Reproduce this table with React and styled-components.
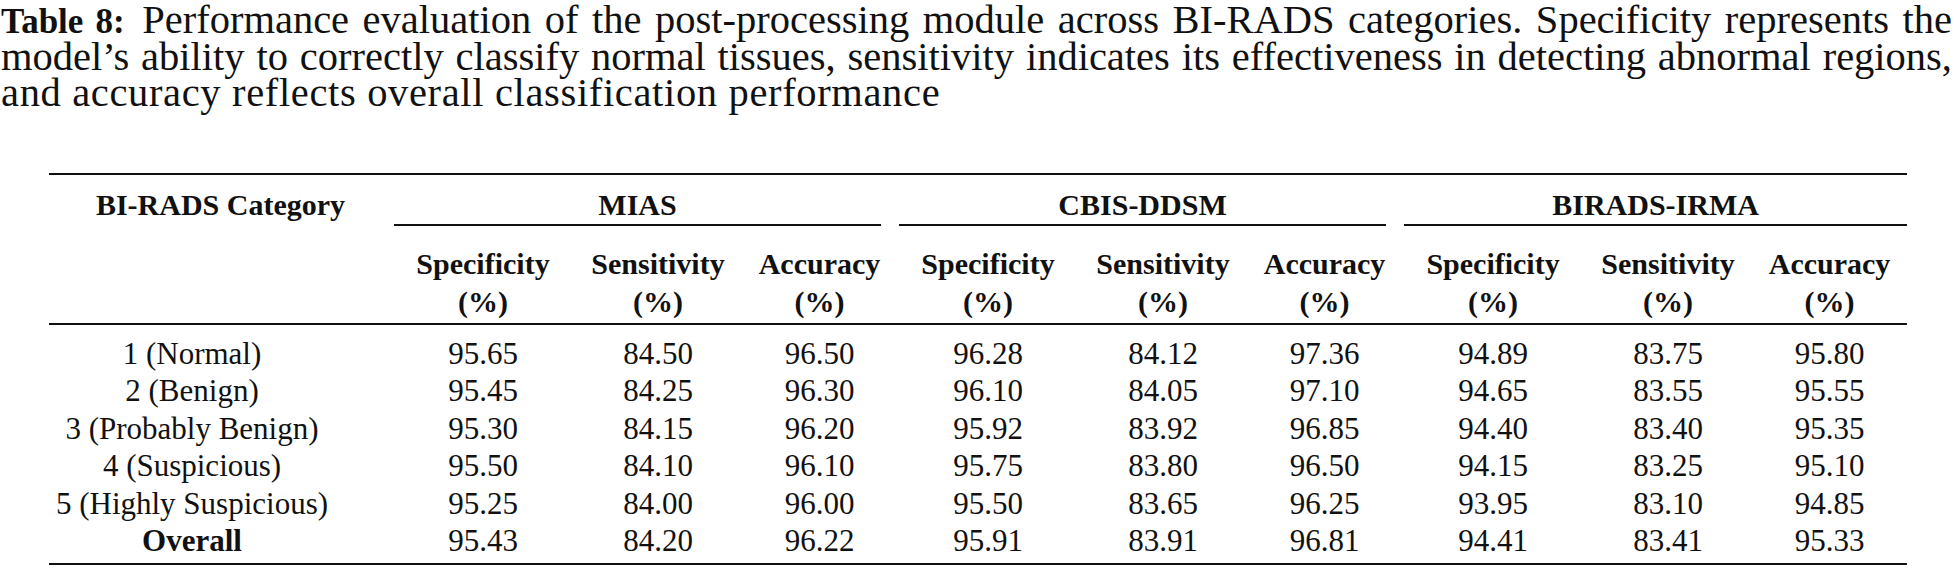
import React from 'react'
import styled, {createGlobalStyle} from 'styled-components'

const GlobalStyle = createGlobalStyle`
body {
    margin: 0;
    background: #fff;
    color: #111;
    font-family: "Liberation Serif", "Times New Roman", serif;
}
`

const groups = ["MIAS", "CBIS-DDSM", "BIRADS-IRMA"]
const metrics = ["Specificity", "Sensitivity", "Accuracy"]

const rows = [
    {label: "1 (Normal)", values: ["95.65", "84.50", "96.50", "96.28", "84.12", "97.36", "94.89", "83.75", "95.80"]},
    {label: "2 (Benign)", values: ["95.45", "84.25", "96.30", "96.10", "84.05", "97.10", "94.65", "83.55", "95.55"]},
    {label: "3 (Probably Benign)", values: ["95.30", "84.15", "96.20", "95.92", "83.92", "96.85", "94.40", "83.40", "95.35"]},
    {label: "4 (Suspicious)", values: ["95.50", "84.10", "96.10", "95.75", "83.80", "96.50", "94.15", "83.25", "95.10"]},
    {label: "5 (Highly Suspicious)", values: ["95.25", "84.00", "96.00", "95.50", "83.65", "96.25", "93.95", "83.10", "94.85"]},
    {label: "Overall", values: ["95.43", "84.20", "96.22", "95.91", "83.91", "96.81", "94.41", "83.41", "95.33"], bold: true},
]

const App = () => {
    return (
        <Page>
            <GlobalStyle/>
            <Caption>
                <CaptionLine $justify>
                    <Label>Table 8:</Label> Performance evaluation of the post-processing module across BI-RADS categories. Specificity represents the
                </CaptionLine>
                <CaptionLine $justify>
                    model’s ability to correctly classify normal tissues, sensitivity indicates its effectiveness in detecting abnormal regions,
                </CaptionLine>
                <CaptionLine $spread>
                    and accuracy reflects overall classification performance
                </CaptionLine>
            </Caption>

            <Table>
                <colgroup>
                    <col style={{width: 343}}/>
                    {groups.map(g => (
                        <React.Fragment key={g}>
                            <col style={{width: 182}}/>
                            <col style={{width: 168}}/>
                            <col style={{width: 155}}/>
                        </React.Fragment>
                    ))}
                </colgroup>
                <thead>
                <tr>
                    <GroupHead>BI-RADS Category</GroupHead>
                    {groups.map((g, i) => (
                        <GroupHead key={g} colSpan={3}>
                            <GroupRule $last={i === groups.length - 1}>{g}</GroupRule>
                        </GroupHead>
                    ))}
                </tr>
                <tr>
                    <SubHead/>
                    {groups.map(g => metrics.map(m => (
                        <SubHead key={g + m}>{m}<br/>(%)</SubHead>
                    )))}
                </tr>
                </thead>
                <tbody>
                {rows.map((row, i) => (
                    <Row key={row.label} $first={i === 0} $last={i === rows.length - 1}>
                        <LabelCell $bold={row.bold}>{row.label}</LabelCell>
                        {row.values.map((v, j) => <Cell key={j}>{v}</Cell>)}
                    </Row>
                ))}
                </tbody>
            </Table>
        </Page>
    )
}

const Page = styled.div`
padding: 2px 2px 0 1px;
width: 1951px;
`

const Caption = styled.div`
font-size: 40.5px;
line-height: 36.5px;
`

const CaptionLine = styled.div`
white-space: nowrap;
text-align: ${p => p.$justify ? 'justify' : 'left'};
text-align-last: ${p => p.$justify ? 'justify' : 'left'};
letter-spacing: ${p => p.$spread ? '0.65px' : '0'};
`

const Label = styled.b`
font-size: 35px;
line-height: 30px;
font-weight: 700;
margin-right: 4px;
`

const Table = styled.table`
margin: 61.5px 0 0 48px;
width: 1858px;
table-layout: fixed;
border-collapse: collapse;
border-top: 2px solid #111;
border-bottom: 2px solid #111;
font-size: 31px;
`

const GroupHead = styled.th`
padding: 11px 0 0;
vertical-align: top;
text-align: center;
font-size: 30px;
font-weight: 700;
line-height: 38px;
`

const GroupRule = styled.span`
display: block;
margin: ${p => p.$last ? '0 0 0 2px' : '0 16px 0 2px'};
border-bottom: 2px solid #111;
`

const SubHead = styled.th`
padding: 19px 0 2px;
text-align: center;
font-size: 30px;
font-weight: 700;
line-height: 38px;
border-bottom: 2px solid #111;
`

const Row = styled.tr`
td {
    padding-top: ${p => p.$first ? '9.5px' : '0'};
    padding-bottom: ${p => p.$last ? '3px' : '0'};
}
`

const Cell = styled.td`
text-align: center;
line-height: 37.6px;
white-space: nowrap;
`

const LabelCell = styled(Cell)`
padding-right: 58px;
font-weight: ${p => p.$bold ? 700 : 400};
`

export default App
